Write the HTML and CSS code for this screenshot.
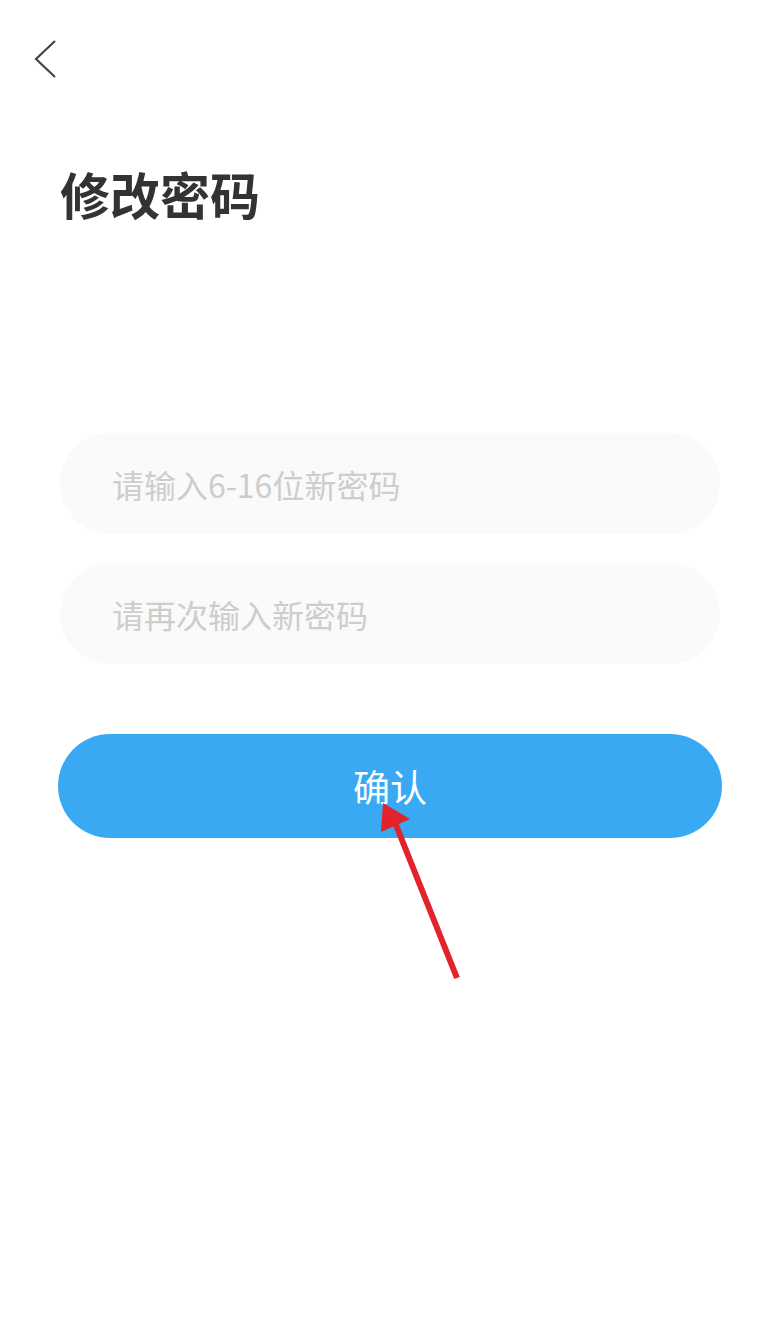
FILE: index.html
```html
<!DOCTYPE html>
<html lang="zh-CN">
  <head>
    <meta charset="UTF-8" />
    <meta name="viewport" content="width=device-width, initial-scale=1.0" />
    <title>修改密码</title>
    <link rel="stylesheet" href="styles.css">
  </head>
  <body>
    <div class="page">
      <nav class="topbar">
        <a class="back" href="#">
          <svg width="26" height="40" viewBox="0 0 26 40">
            <path d="M23 2 L4 20 L23 38" fill="none" stroke="#444" stroke-width="2.2" />
          </svg>
        </a>
      </nav>

      <h1 class="title">修改密码</h1>

      <form class="form">
        <input class="field" type="password" placeholder="请输入6-16位新密码" />
        <input class="field" type="password" placeholder="请再次输入新密码" />
        <button class="submit" type="button">确认</button>
      </form>

      <!-- pointer to the confirm button -->
      <svg class="pointer" width="110" height="200" viewBox="0 0 110 200">
        <line x1="97" y1="188" x2="34" y2="30" stroke="#e1232b" stroke-width="6" />
        <polygon points="23,13 21,42 50,29" fill="#e1232b" />
      </svg>
    </div>
  </body>
</html>
```

FILE: styles.css
```css
html,
body {
  margin: 0;
  padding: 0;
  background: #fff;
  font-family: "Noto Sans CJK SC", "Noto Sans", sans-serif;
}
.page {
  position: relative;
  width: 778px;
  min-height: 1336px;
}
.topbar {
  height: 120px;
  padding: 39px 0 0 32px;
  box-sizing: border-box;
}
.back {
  display: block;
  width: 26px;
  height: 40px;
}
.back svg {
  display: block;
}
.title {
  margin: 38px 0 0 60px;
  font-size: 50px;
  line-height: 70px;
  font-weight: 700;
  color: #333;
}
.form {
  display: flex;
  flex-direction: column;
  gap: 29px;
  margin: 205px 58px 0 58px;
}
.field {
  height: 101px;
  margin: 0 0 0 2px;
  padding: 0 0 0 52px;
  border: none;
  border-radius: 51px;
  background: #fafafa;
  font-family: inherit;
  font-size: 32px;
  color: #333;
  outline: none;
}
.field::placeholder {
  color: #cdcdcd;
}
.submit {
  height: 104px;
  margin: 41px -2px 0 0;
  border: none;
  border-radius: 52px;
  background: #3aa9f3;
  color: #fff;
  font-family: inherit;
  font-size: 37px;
  cursor: pointer;
}
.pointer {
  position: absolute;
  left: 360px;
  top: 790px;
}
```
